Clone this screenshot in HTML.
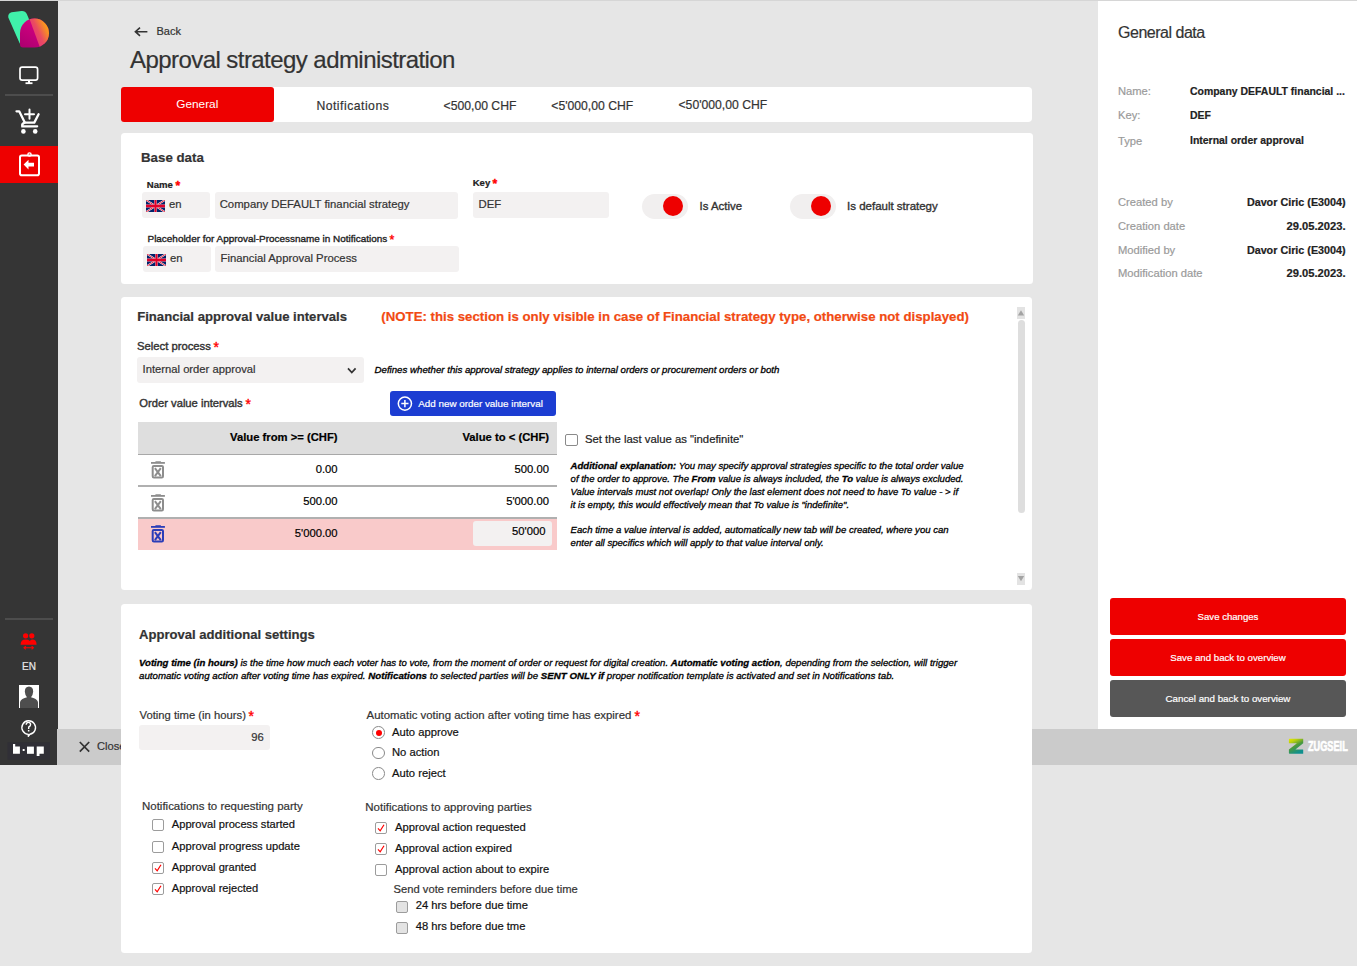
<!DOCTYPE html>
<html><head><meta charset="utf-8">
<style>
*{margin:0;padding:0;box-sizing:border-box}
html,body{width:1357px;height:966px;overflow:hidden;background:#e6e6e6;font-family:"Liberation Sans",sans-serif;color:#222}
.a{position:absolute}
.t{position:absolute;white-space:nowrap;line-height:1;-webkit-text-stroke-width:0.2px}
.b{font-weight:700}
.i{font-style:italic}
.req{color:#f00;-webkit-text-stroke:0.3px #f00;display:inline-block;transform:translateY(0.9px) scale(1.25);transform-origin:50% 25%}
.panel{position:absolute;background:#fff;border-radius:3.5px}
.inp{position:absolute;background:#f3f1f1;border-radius:3px}
.cb{position:absolute;width:12px;height:12px;border:1px solid #8a8a8a;border-radius:2px;background:#fff}
.rd{position:absolute;width:13px;height:13px;border:1px solid #8a8a8a;border-radius:50%;background:#fff}
</style></head>
<body>
<!-- top line -->
<div class="a" style="left:0;top:0;width:1357px;height:1px;background:#d6d6d6"></div>

<!-- SIDEBAR -->
<div id="sb" class="a" style="left:0;top:1px;width:58px;height:764px;background:#353535"></div>
<svg class="a" style="left:0;top:0" width="58" height="766" viewBox="0 0 58 766">
 <defs>
  <linearGradient id="lg1" x1="0" y1="1" x2="0.6" y2="0"><stop offset="0" stop-color="#a8006e"/><stop offset="1" stop-color="#dc0084"/></linearGradient>
  <linearGradient id="lg2" x1="0.2" y1="0.9" x2="1" y2="0.35"><stop offset="0" stop-color="#e4307c"/><stop offset="0.45" stop-color="#ea4a62"/><stop offset="1" stop-color="#ffb800"/></linearGradient>
  <clipPath id="cc"><path d="M20 33 A14.5 14.5 0 1 1 34.5 47.6 L23 47.6 Q20 47.6 20 44.6 Z"/></clipPath>
 </defs>
 <path d="M8.3 17.5 Q7.6 13.4 11.6 12.2 L21.5 10.9 Q25.3 10.6 26.8 14 L31 24 L21 44 Q19.7 44.2 19.2 42.3 Z" fill="#40f0aa"/>
 <g clip-path="url(#cc)"><rect x="19" y="17" width="32" height="32" fill="url(#lg1)"/><path d="M28.8 17 L51 17 L51 49 L40.5 49 Z" fill="url(#lg2)"/></g>
 <!-- monitor -->
 <rect x="20" y="67.2" width="17.6" height="13" rx="2.2" fill="none" stroke="#fff" stroke-width="1.7"/>
 <rect x="28" y="80.5" width="2" height="2.5" fill="#fff"/>
 <rect x="25.5" y="82.3" width="7" height="1.8" fill="#fff"/>
 <rect x="5" y="94" width="48" height="2" fill="#4d4d4d"/>
 <!-- cart -->
 <path d="M16.5 111.3 L19.2 111.3 L24.8 122.6 L34.3 122.6 L38.6 114.3" fill="none" stroke="#fff" stroke-width="2.3" stroke-linecap="round" stroke-linejoin="round"/>
 <path d="M24.8 122.6 Q21.6 123.4 22.2 126.3 L37.2 126.3" fill="none" stroke="#fff" stroke-width="2.2" stroke-linecap="round"/>
 <circle cx="23.4" cy="131.4" r="2.3" fill="#fff"/>
 <circle cx="35.2" cy="131.4" r="2.3" fill="#fff"/>
 <path d="M29.5 109.5 V118.8 M25 114.2 H34" stroke="#fff" stroke-width="2" stroke-linecap="round"/>
</svg>
<div class="a" style="left:0;top:146px;width:58px;height:37px;background:#ee0000"></div>
<svg class="a" style="left:0;top:140px" width="58" height="50" viewBox="0 140 58 50">
 <rect x="20" y="155.4" width="19" height="19.8" rx="1.8" fill="none" stroke="#fff" stroke-width="2"/>
 <circle cx="29.5" cy="154.5" r="1.6" fill="none" stroke="#fff" stroke-width="1.4"/>
 <path d="M23.6 164.6 L28.5 159.8 L28.5 162.7 L34 162.7 L34 166.5 L28.5 166.5 L28.5 169.6 Z" fill="#fff"/>
</svg>
<svg class="a" style="left:0;top:600px" width="58" height="166" viewBox="0 600 58 166">
 <rect x="5" y="618" width="48" height="2" fill="#4d4d4d"/>
 <circle cx="25.6" cy="635.8" r="2.6" fill="#f00"/>
 <circle cx="31.8" cy="635.8" r="2.6" fill="#f00"/>
 <path d="M20.6 644.8 Q20.6 639.6 25.6 639.6 Q28.6 639.6 29.8 641 Q31 639.6 32.4 639.6 Q36.6 639.6 36.6 644.8 Z" fill="#f00"/>
 <path d="M24 647.8 H33.4 M25.8 646.2 L24 647.8 L25.8 649.4 M31.6 646.2 L33.4 647.8 L31.6 649.4" fill="none" stroke="#f00" stroke-width="1.1"/>
 <rect x="19" y="685" width="20" height="23" fill="#fff"/>
 <path d="M20 708 L20 702.5 Q20.5 699.5 24 698.3 L27 697.3 Q25 695 24.8 691.5 Q25 686.8 29 686.6 Q33 686.8 33.2 691.5 Q33 695 31 697.3 L34 698.3 Q37.5 699.5 38 702.5 L38 708 Z" fill="#4e4e4e"/>
 <path d="M28.4 734.4 A6.8 6.8 0 1 1 29.9 734.3 L28.3 736.2 Z" fill="none" stroke="#fff" stroke-width="1.4" stroke-linejoin="round"/>
 <path d="M26.2 724.8 Q26.2 722.4 28.4 722.4 Q30.6 722.4 30.6 724.6 Q30.6 726.1 28.8 727 L28.6 729" fill="none" stroke="#fff" stroke-width="1.4"/>
 <rect x="27.9" y="730" width="1.5" height="1.5" fill="#fff"/>
 <rect x="7.5" y="742.3" width="42.5" height="17.4" fill="#302f36"/>
 <path d="M13 743.9 H15.2 V746.6 H19.9 V753.8 H13 Z" fill="#fff"/>
 <rect x="22.7" y="749" width="1.9" height="2" fill="#fff"/>
 <rect x="27" y="746.6" width="6.9" height="7.2" fill="#fff"/>
 <path d="M36.7 746.6 H43.8 V753.8 H39.5 V756 H36.7 Z" fill="#fff"/>
</svg>
<div class="t" style="left:22px;top:661.5px;font-size:10px;color:#e8e8e8">EN</div>


<!-- HEADER -->
<div id="hdr">
<svg class="a" style="left:133px;top:25px" width="16" height="13" viewBox="0 0 16 13"><path d="M14.4 6.7 H2.6 M7 2.6 L2.4 6.7 L7 10.8" fill="none" stroke="#333" stroke-width="1.6"/></svg>
<div class="t" style="left:156.5px;top:25.7px;font-size:11px;color:#333">Back</div>
<div class="t" style="left:130px;top:47.7px;font-size:24px;letter-spacing:-0.56px;color:#333">Approval strategy administration</div>
</div>

<!-- TABS -->
<div id="tabs">
<div class="panel" style="left:121px;top:87px;width:911px;height:35px;border-radius:4px"></div>
<div class="a" style="left:121px;top:87px;width:153px;height:35.4px;background:#ee0000;border-radius:3px"></div>
<div class="t" style="left:176.3px;top:98.5px;font-size:11.8px;color:#fff;-webkit-text-stroke-width:0">General</div>
<div class="t" style="left:316.4px;top:99.6px;font-size:12.2px;color:#333;letter-spacing:0.5px">Notifications</div>
<div class="t" style="left:443.6px;top:99.6px;font-size:12.2px;color:#333">&lt;500,00 CHF</div>
<div class="t" style="left:551.3px;top:99.6px;font-size:12.2px;color:#333">&lt;5'000,00 CHF</div>
<div class="t" style="left:678.5px;top:99.1px;font-size:12.2px;color:#333">&lt;50'000,00 CHF</div>
</div>

<!-- BASE DATA -->
<div id="base">
<div class="panel" style="left:121px;top:133px;width:912px;height:150.7px"></div>
<div class="t b" style="left:141px;top:150.9px;font-size:13.3px;color:#333">Base data</div>
<div class="t b" style="left:146.8px;top:180px;font-size:9.6px;color:#222">Name <span class="req">*</span></div>
<div class="inp" style="left:142px;top:192px;width:68px;height:26px"></div>
<svg class="a" style="left:146px;top:200px" width="19" height="12" viewBox="0 0 60 30" preserveAspectRatio="none"><rect width="60" height="30" fill="#012169"/><path d="M0,0 L60,30 M60,0 L0,30" stroke="#fff" stroke-width="5"/><path d="M0,0 L60,30 M60,0 L0,30" stroke="#e8102e" stroke-width="2.5"/><path d="M30,0 V30 M0,15 H60" stroke="#f4c0c8" stroke-width="8"/><path d="M30,0 V30 M0,15 H60" stroke="#e0002a" stroke-width="6"/></svg>
<div class="t" style="left:169px;top:199.3px;font-size:11.3px;color:#333">en</div>
<div class="inp" style="left:214.6px;top:192px;width:243.6px;height:26.5px"></div>
<div class="t" style="left:219.7px;top:199.2px;font-size:11.34px;color:#333">Company DEFAULT financial strategy</div>
<div class="t b" style="left:472.7px;top:178.2px;font-size:9.6px;color:#222">Key <span class="req">*</span></div>
<div class="inp" style="left:472.7px;top:192px;width:136px;height:26px"></div>
<div class="t" style="left:478.5px;top:199.2px;font-size:11.34px;color:#333">DEF</div>
<div class="a" style="left:642px;top:194px;width:46px;height:25px;border-radius:12.5px;background:#f1efef"></div>
<div class="a" style="left:662.5px;top:196.2px;width:20px;height:20px;border-radius:50%;background:#ee0000"></div>
<div class="t" style="left:699.6px;top:200.5px;font-size:11.4px;color:#333;-webkit-text-stroke:0.35px #333">Is Active</div>
<div class="a" style="left:790px;top:194px;width:46px;height:25px;border-radius:12.5px;background:#f1efef"></div>
<div class="a" style="left:810.6px;top:196.2px;width:20px;height:20px;border-radius:50%;background:#ee0000"></div>
<div class="t" style="left:847px;top:200.5px;font-size:11.5px;color:#333;-webkit-text-stroke:0.35px #333">Is default strategy</div>
<div class="t" style="left:147.5px;top:233.6px;font-size:9.95px;color:#222;-webkit-text-stroke:0.35px #222">Placeholder for Approval-Processname in Notifications <span class="req">*</span></div>
<div class="inp" style="left:142.7px;top:246px;width:68px;height:25.5px"></div>
<svg class="a" style="left:147px;top:254px" width="19" height="12" viewBox="0 0 60 30" preserveAspectRatio="none"><rect width="60" height="30" fill="#012169"/><path d="M0,0 L60,30 M60,0 L0,30" stroke="#fff" stroke-width="5"/><path d="M0,0 L60,30 M60,0 L0,30" stroke="#e8102e" stroke-width="2.5"/><path d="M30,0 V30 M0,15 H60" stroke="#f4c0c8" stroke-width="8"/><path d="M30,0 V30 M0,15 H60" stroke="#e0002a" stroke-width="6"/></svg>
<div class="t" style="left:170px;top:253px;font-size:11.3px;color:#333">en</div>
<div class="inp" style="left:215px;top:246px;width:244px;height:25.5px"></div>
<div class="t" style="left:220.5px;top:252.9px;font-size:11.32px;color:#333">Financial Approval Process</div>
</div>

<!-- FINANCIAL -->
<div id="fin">
<div class="panel" style="left:121px;top:297px;width:911px;height:293px"></div>
<div class="t b" style="left:137.2px;top:309.7px;font-size:13.12px;color:#333">Financial approval value intervals</div>
<div class="t b" style="left:381.3px;top:310.1px;font-size:13.24px;color:#f24a12">(NOTE: this section is only visible in case of Financial strategy type, otherwise not displayed)</div>
<div class="t" style="left:137px;top:340.8px;font-size:11.28px;color:#333;-webkit-text-stroke:0.4px #333">Select process <span class="req">*</span></div>
<div class="inp" style="left:137px;top:357px;width:227px;height:26px"></div>
<div class="t" style="left:142.6px;top:363.5px;font-size:11.23px;color:#333">Internal order approval</div>
<svg class="a" style="left:346px;top:366px" width="12" height="9" viewBox="0 0 12 9"><path d="M2 2.4 L5.8 6.6 L9.6 2.4" fill="none" stroke="#333" stroke-width="1.7"/></svg>
<div class="t i" style="left:374.5px;top:365px;font-size:9.7px;color:#000;-webkit-text-stroke:0.3px #000">Defines whether this approval strategy applies to internal orders or procurement orders or both</div>
<div class="t" style="left:139.3px;top:397.5px;font-size:11.21px;color:#333;-webkit-text-stroke:0.4px #333">Order value intervals <span class="req">*</span></div>
<div class="a" style="left:390px;top:391px;width:166px;height:25px;background:#1c3dd2;border-radius:3px"></div>
<svg class="a" style="left:396px;top:395px" width="18" height="18" viewBox="0 0 18 18"><circle cx="8.9" cy="8.6" r="6.6" fill="none" stroke="#fff" stroke-width="1.5"/><path d="M8.9 5 V12.2 M5.3 8.6 H12.5" stroke="#fff" stroke-width="1.5"/></svg>
<div class="t" style="left:418.2px;top:398.6px;font-size:9.86px;color:#fff">Add new order value interval</div>
<div class="a" style="left:138px;top:422px;width:419px;height:32px;background:#dedede"></div>
<div class="a" style="left:138px;top:454px;width:419px;height:1px;background:#a8a8a8"></div>
<div class="t b" style="right:1019.4px;top:432.3px;font-size:11.26px;color:#000">Value from &gt;= (CHF)</div>
<div class="t b" style="right:808px;top:432.3px;font-size:11.26px;color:#000">Value to &lt; (CHF)</div>
<svg class="a" style="left:151px;top:461px" width="14" height="18" viewBox="0 0 14 18"><rect x="4.3" y="0.2" width="5.7" height="1.4" rx="0.5" fill="#8d8d8d"/><rect x="0" y="1" width="13.9" height="1.8" fill="#8d8d8d"/><rect x="1.7" y="4.9" width="10.3" height="11.6" rx="1.2" fill="none" stroke="#8d8d8d" stroke-width="2"/><path d="M3.9 7.2 L9.8 15.1 M9.8 7.2 L3.9 15.1" stroke="#8d8d8d" stroke-width="2"/></svg>
<div class="t" style="right:1019.4px;top:464px;font-size:11.26px;color:#000">0.00</div>
<div class="t" style="right:808px;top:464px;font-size:11.26px;color:#000">500.00</div>
<div class="a" style="left:138px;top:485.2px;width:419px;height:1.6px;background:#b0b0b0"></div>
<svg class="a" style="left:151px;top:493.5px" width="14" height="18" viewBox="0 0 14 18"><rect x="4.3" y="0.2" width="5.7" height="1.4" rx="0.5" fill="#8d8d8d"/><rect x="0" y="1" width="13.9" height="1.8" fill="#8d8d8d"/><rect x="1.7" y="4.9" width="10.3" height="11.6" rx="1.2" fill="none" stroke="#8d8d8d" stroke-width="2"/><path d="M3.9 7.2 L9.8 15.1 M9.8 7.2 L3.9 15.1" stroke="#8d8d8d" stroke-width="2"/></svg>
<div class="t" style="right:1019.4px;top:495.7px;font-size:11.26px;color:#000">500.00</div>
<div class="t" style="right:808px;top:495.7px;font-size:11.26px;color:#000">5'000.00</div>
<div class="a" style="left:138px;top:517.2px;width:419px;height:1.6px;background:#b0b0b0"></div>
<div class="a" style="left:138px;top:519px;width:419px;height:31px;background:#f9caca"></div>
<svg class="a" style="left:151px;top:525px" width="14" height="18" viewBox="0 0 14 18"><rect x="4.3" y="0.2" width="5.7" height="1.4" rx="0.5" fill="#2b3db8"/><rect x="0" y="1" width="13.9" height="1.8" fill="#2b3db8"/><rect x="1.7" y="4.9" width="10.3" height="11.6" rx="1.2" fill="none" stroke="#2b3db8" stroke-width="2"/><path d="M3.9 7.2 L9.8 15.1 M9.8 7.2 L3.9 15.1" stroke="#2b3db8" stroke-width="2"/></svg>
<div class="t" style="right:1019.4px;top:527.5px;font-size:11.26px;color:#000">5'000.00</div>
<div class="inp" style="left:473px;top:521px;width:79px;height:25px"></div>
<div class="t" style="right:811.5px;top:526.3px;font-size:11.26px;color:#000">50'000</div>
<div class="cb" style="left:565.3px;top:434.2px;width:12.3px;height:11.7px"></div>
<div class="t" style="left:585px;top:434.3px;font-size:11.32px;color:#222">Set the last value as "indefinite"</div>
<div class="a i" style="left:570.6px;top:459.3px;font-size:9.56px;line-height:13px;color:#000;white-space:nowrap;-webkit-text-stroke:0.3px #000">
<b>Additional explanation:</b> You may specify approval strategies specific to the total order value<br>
of the order to approve. The <b>From</b> value is always included, the <b>To</b> value is always excluded.<br>
Value intervals must not overlap! Only the last element does not need to have To value - &gt; if<br>
it is empty, this would effectively mean that To value is "indefinite".</div>
<div class="a i" style="left:570.6px;top:523.4px;font-size:9.6px;line-height:13px;color:#000;white-space:nowrap;-webkit-text-stroke:0.3px #000">
Each time a value interval is added, automatically new tab will be created, where you can<br>
enter all specifics which will apply to that value interval only.</div>
<div class="a" style="left:1017px;top:307px;width:8px;height:12px;background:#e3e3e3"></div>
<svg class="a" style="left:1017px;top:307px" width="8" height="12" viewBox="0 0 8 12"><path d="M0.8 8.4 L4 3.2 L7.2 8.4 Z" fill="#a3a3a3"/></svg>
<div class="a" style="left:1018px;top:320px;width:7px;height:193px;background:#dedede;border-radius:3.5px"></div>
<div class="a" style="left:1017px;top:573px;width:8px;height:12px;background:#e3e3e3"></div>
<svg class="a" style="left:1017px;top:573px" width="8" height="12" viewBox="0 0 8 12"><path d="M0.8 3 L4 8.2 L7.2 3 Z" fill="#a3a3a3"/></svg>
</div>

<!-- BOTTOM BAR -->
<div id="bar">
<div class="a" style="left:57px;top:729px;width:1300px;height:36px;background:#cbcbcb"></div>
<svg class="a" style="left:78px;top:740px" width="13" height="13" viewBox="0 0 13 13"><path d="M1.8 2 L11.2 11.6 M11.2 2 L1.8 11.6" stroke="#333" stroke-width="1.7"/></svg>
<div class="t" style="left:96.9px;top:740.5px;font-size:11.2px;color:#333">Close</div>
<svg class="a" style="left:1288px;top:738px" width="17" height="17" viewBox="0 0 17 17">
 <defs><linearGradient id="zg" x1="0" y1="0" x2="0.5" y2="1"><stop offset="0" stop-color="#e8ea00"/><stop offset="0.25" stop-color="#b8d010"/><stop offset="0.55" stop-color="#4e9a3a"/><stop offset="1" stop-color="#10908e"/></linearGradient></defs>
 <path d="M1.5 0.8 H15.2 V5.2 L7.4 11.4 H15 Q15.2 11.4 15.2 12 V15.8 H1.6 Q0.9 15.8 0.9 15 V11.4 L8.9 5.2 H0.9 V1.4 Q0.9 0.8 1.5 0.8 Z" fill="url(#zg)"/>
</svg>
<div class="t b" style="left:1308px;top:739px;font-size:14.8px;color:#fff;-webkit-text-stroke:0.7px #fff;transform:scaleX(0.62);transform-origin:0 0">ZUGSEIL</div>
</div>

<!-- RIGHT PANEL -->
<div id="rp">
<div class="a" style="left:1098px;top:1px;width:259px;height:728px;background:#fff"></div>
<div class="t" style="left:1118px;top:24.6px;font-size:16px;letter-spacing:-0.48px;color:#333">General data</div>
<div class="t" style="left:1118px;top:85.8px;font-size:11.2px;color:#9a9a9a">Name:</div>
<div class="t" style="left:1118px;top:110.4px;font-size:11.2px;color:#9a9a9a">Key:</div>
<div class="t" style="left:1118px;top:135.6px;font-size:11.2px;color:#9a9a9a">Type</div>
<div class="t b" style="left:1190px;top:86.6px;font-size:10.46px;color:#222">Company DEFAULT financial ...</div>
<div class="t b" style="left:1190px;top:111.2px;font-size:10.46px;color:#222">DEF</div>
<div class="t b" style="left:1190px;top:136.4px;font-size:10.46px;color:#222">Internal order approval</div>
<div class="t" style="left:1118px;top:196.5px;font-size:11.2px;color:#9a9a9a">Created by</div>
<div class="t" style="left:1118px;top:220.5px;font-size:11.2px;color:#9a9a9a">Creation date</div>
<div class="t" style="left:1118px;top:244.7px;font-size:11.2px;color:#9a9a9a">Modified by</div>
<div class="t" style="left:1118px;top:268.4px;font-size:11.2px;color:#9a9a9a">Modification date</div>
<div class="t b" style="right:11.4px;top:196.7px;font-size:10.77px;color:#222">Davor Ciric (E3004)</div>
<div class="t b" style="right:11.4px;top:220.5px;font-size:11.2px;color:#222">29.05.2023.</div>
<div class="t b" style="right:11.4px;top:244.9px;font-size:10.77px;color:#222">Davor Ciric (E3004)</div>
<div class="t b" style="right:11.4px;top:268.4px;font-size:11.2px;color:#222">29.05.2023.</div>
<div class="a" style="left:1110px;top:598px;width:236px;height:36.5px;background:#ee0000;border-radius:3px"></div>
<div class="a" style="left:1110px;top:639px;width:236px;height:36.5px;background:#ee0000;border-radius:3px"></div>
<div class="a" style="left:1110px;top:680px;width:236px;height:36.5px;background:#575757;border-radius:3px"></div>
<div class="t" style="left:1110px;width:236px;text-align:center;top:612.2px;font-size:9.6px;color:#fff">Save changes</div>
<div class="t" style="left:1110px;width:236px;text-align:center;top:652.9px;font-size:9.67px;color:#fff">Save and back to overview</div>
<div class="t" style="left:1110px;width:236px;text-align:center;top:694.2px;font-size:9.78px;color:#fff">Cancel and back to overview</div>
</div>

<!-- ADDITIONAL SETTINGS -->
<div id="add">
<div class="panel" style="left:121px;top:604px;width:911px;height:349px"></div>
<div class="t b" style="left:139px;top:628.2px;font-size:13.09px;color:#333">Approval additional settings</div>
<div class="a i" style="left:139px;top:655.5px;font-size:9.6px;line-height:13px;color:#000;white-space:nowrap;-webkit-text-stroke:0.3px #000"><b>Voting time (in hours)</b> is the time how much each voter has to vote, from the moment of order or request for digital creation. <b>Automatic voting action</b>, depending from the selection, will trigger</div>
<div class="a i" style="left:139px;top:668.5px;font-size:9.71px;line-height:13px;color:#000;white-space:nowrap;-webkit-text-stroke:0.3px #000">automatic voting action after voting time has expired. <b>Notifications</b> to selected parties will be <b>SENT ONLY if</b> proper notification template is activated and set in Notifications tab.</div>
<div class="t" style="left:139.5px;top:709.8px;font-size:11.27px;color:#333">Voting time (in hours) <span class="req">*</span></div>
<div class="inp" style="left:139px;top:725px;width:130.7px;height:25px"></div>
<div class="t" style="right:1093.3px;top:731.5px;font-size:11.27px;color:#333">96</div>
<div class="t" style="left:366.6px;top:709.5px;font-size:11.43px;color:#333">Automatic voting action after voting time has expired <span class="req">*</span></div>
<div class="rd" style="left:372.2px;top:726.4px;width:12.6px;height:12.6px;border-color:#8a8a8a"></div><div class="a" style="left:375.5px;top:729.6999999999999px;width:6px;height:6px;border-radius:50%;background:#f00"></div>
<div class="rd" style="left:372.2px;top:746.7px;width:12.6px;height:12.6px;border-color:#8a8a8a"></div>
<div class="rd" style="left:372.2px;top:767.3px;width:12.6px;height:12.6px;border-color:#8a8a8a"></div>
<div class="t" style="left:392px;top:727px;font-size:11.23px;color:#111">Auto approve</div>
<div class="t" style="left:392px;top:746.9px;font-size:11.23px;color:#111">No action</div>
<div class="t" style="left:392px;top:767.9px;font-size:11.23px;color:#111">Auto reject</div>
<div class="t" style="left:142px;top:800.7px;font-size:11.47px;color:#333">Notifications to requesting party</div>
<div class="cb" style="left:152.2px;top:819.3px;width:12px;height:12px;background:#fff;border-color:#9c9c9c"></div>
<div class="cb" style="left:152.2px;top:840.7px;width:12px;height:12px;background:#fff;border-color:#9c9c9c"></div>
<div class="cb" style="left:152.2px;top:862.1px;width:12px;height:12px;background:#fff;border-color:#9c9c9c"></div><svg class="a" style="left:152.2px;top:862.1px" width="12" height="12" viewBox="0 0 12 12"><path d="M3 6.3 L5.2 8.8 L9 2.8" fill="none" stroke="#f00" stroke-width="1.2"/></svg>
<div class="cb" style="left:152.2px;top:883.2px;width:12px;height:12px;background:#fff;border-color:#9c9c9c"></div><svg class="a" style="left:152.2px;top:883.2px" width="12" height="12" viewBox="0 0 12 12"><path d="M3 6.3 L5.2 8.8 L9 2.8" fill="none" stroke="#f00" stroke-width="1.2"/></svg>
<div class="t" style="left:171.8px;top:819.2px;font-size:11.14px;color:#111">Approval process started</div>
<div class="t" style="left:171.8px;top:840.6px;font-size:11.2px;color:#111">Approval progress update</div>
<div class="t" style="left:171.8px;top:862.0px;font-size:11.1px;color:#111">Approval granted</div>
<div class="t" style="left:171.8px;top:883.0px;font-size:11.1px;color:#111">Approval rejected</div>
<div class="t" style="left:365.3px;top:802.3px;font-size:11.47px;color:#333">Notifications to approving parties</div>
<div class="cb" style="left:375px;top:822.4px;width:12px;height:12px;background:#fff;border-color:#9c9c9c"></div><svg class="a" style="left:375px;top:822.4px" width="12" height="12" viewBox="0 0 12 12"><path d="M3 6.3 L5.2 8.8 L9 2.8" fill="none" stroke="#f00" stroke-width="1.2"/></svg>
<div class="cb" style="left:375px;top:843.4px;width:12px;height:12px;background:#fff;border-color:#9c9c9c"></div><svg class="a" style="left:375px;top:843.4px" width="12" height="12" viewBox="0 0 12 12"><path d="M3 6.3 L5.2 8.8 L9 2.8" fill="none" stroke="#f00" stroke-width="1.2"/></svg>
<div class="cb" style="left:375px;top:864px;width:12px;height:12px;background:#fff;border-color:#9c9c9c"></div>
<div class="t" style="left:395px;top:822.1px;font-size:11.25px;color:#111">Approval action requested</div>
<div class="t" style="left:395px;top:843.1px;font-size:11.2px;color:#111">Approval action expired</div>
<div class="t" style="left:395px;top:864.1px;font-size:11.2px;color:#111">Approval action about to expire</div>
<div class="t" style="left:393.6px;top:884.3px;font-size:11.2px;color:#333">Send vote reminders before due time</div>
<div class="cb" style="left:396.3px;top:900.6px;width:12px;height:12px;background:#e3e3e3;border-color:#9c9c9c"></div>
<div class="cb" style="left:396.3px;top:921.5px;width:12px;height:12px;background:#e3e3e3;border-color:#9c9c9c"></div>
<div class="t" style="left:415.7px;top:900.2px;font-size:11.22px;color:#111">24 hrs before due time</div>
<div class="t" style="left:415.7px;top:921.1px;font-size:11.22px;color:#111">48 hrs before due tme</div>
</div>

</body></html>
